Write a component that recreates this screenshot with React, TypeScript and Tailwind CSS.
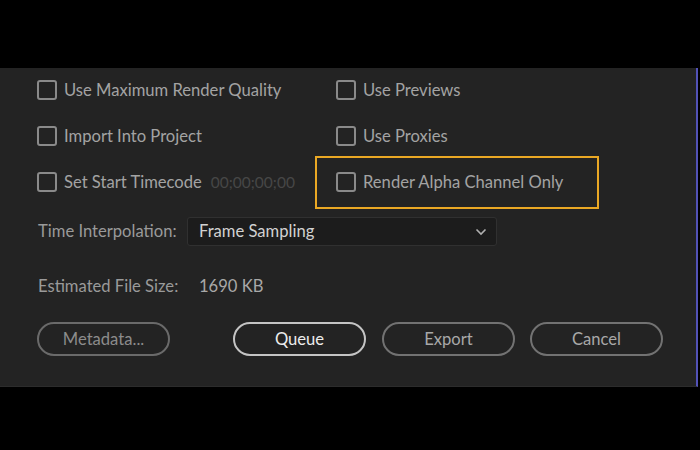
import React from "react";

function Box() {
  return <div className="w-[20px] h-[20px] shrink-0 rounded-[3px] border-2 border-[#8a8a8a]" />;
}

function Check({ label, extra }: { label: string; extra?: string }) {
  return (
    <div className="flex items-center">
      <Box />
      <span className="ml-[7px] text-[#a3a3a3] text-[16.6px] whitespace-nowrap">{label}</span>
      {extra && <span className="ml-[9px] text-[#474747] text-[15.5px] whitespace-nowrap">{extra}</span>}
    </div>
  );
}

function Btn({ label, border, color }: { label: string; border: string; color: string }) {
  return (
    <div className={`w-[133px] h-[34px] rounded-full border-2 flex items-center justify-center text-[16.6px] ${border} ${color}`}>
      {label}
    </div>
  );
}

export default function App() {
  return (
    <div className="w-[700px] h-[450px] bg-black overflow-hidden" style={{ fontFamily: "Lato, 'Noto Sans', sans-serif" }}>
      <div className="mt-[68px] h-[319px] w-[698px] bg-[#232323] border-r-2 border-[#5252b8] border-b border-b-[#2c2c2c] flex flex-col">
        <div className="flex h-[45px] items-center">
          <div className="w-[315px] pl-[37px]"><Check label="Use Maximum Render Quality" /></div>
          <div className="pl-[21px]"><Check label="Use Previews" /></div>
        </div>
        <div className="flex h-[46px] items-center">
          <div className="w-[315px] pl-[37px]"><Check label="Import Into Project" /></div>
          <div className="pl-[21px]"><Check label="Use Proxies" /></div>
        </div>
        <div className="flex h-[53px] items-center mt-[-3px]">
          <div className="w-[315px] pl-[37px]"><Check label="Set Start Timecode" extra="00;00;00;00" /></div>
          <div className="w-[284px] h-[53px] border-2 border-[#eaa824] pl-[19px] flex items-center"><Check label="Render Alpha Channel Only" /></div>
        </div>
        <div className="flex items-center mt-[8px] h-[29px] pl-[38px]">
          <span className="w-[149px] text-[#9a9a9a] text-[16.6px] whitespace-nowrap">Time Interpolation:</span>
          <div className="w-[310px] h-[29px] bg-[#1c1c1c] border border-[#303030] rounded-[3px] flex items-center justify-between pl-[11px] pr-[9px]">
            <span className="text-[#d2d2d2] text-[16.6px]">Frame Sampling</span>
            <svg width="12" height="8" viewBox="0 0 12 8" fill="none">
              <path d="M1.5 1.5 L6 6 L10.5 1.5" stroke="#b0b0b0" strokeWidth="1.6" />
            </svg>
          </div>
        </div>
        <div className="flex items-center mt-[30px] h-[20px] pl-[38px]">
          <span className="w-[161px] text-[#9a9a9a] text-[16.6px] whitespace-nowrap">Estimated File Size:</span>
          <span className="text-[#a8a8a8] text-[16.6px]">1690 KB</span>
        </div>
        <div className="flex items-center mt-[26px] pl-[37px]">
          <Btn label="Metadata..." border="border-[#6a6a6a]" color="text-[#8c8c8c]" />
          <div className="ml-[63px]"><Btn label="Queue" border="border-[#c4c4c4]" color="text-[#ececec]" /></div>
          <div className="ml-[16px]"><Btn label="Export" border="border-[#727272]" color="text-[#a8a8a8]" /></div>
          <div className="ml-[15px]"><Btn label="Cancel" border="border-[#727272]" color="text-[#a8a8a8]" /></div>
        </div>
      </div>
    </div>
  );
}
